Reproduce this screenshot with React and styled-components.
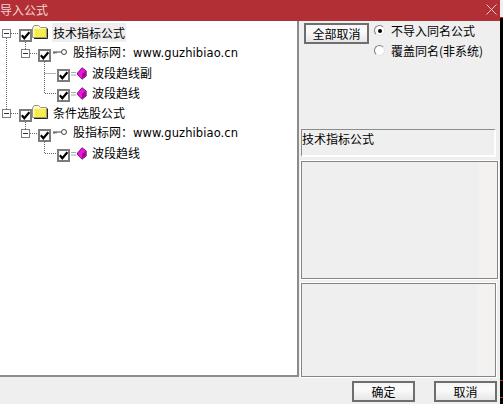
import React from "react";
import styled, { createGlobalStyle } from "styled-components";

const Global = createGlobalStyle`
  html, body { margin: 0; padding: 0; background: #000; }
  body { font-family: "Noto Sans CJK SC", "Liberation Sans", sans-serif; font-size: 12px; color: #000; }
  * { box-sizing: border-box; }
`;
const Screen = styled.div`
  width: 503px; height: 404px; display: flex; overflow: hidden; background: #000;
`;
const Dialog = styled.div`
  width: 500px; height: 404px; display: flex; flex-direction: column; background: #efefef;
`;
const Edge = styled.div`
  width: 3px; height: 404px; display: flex; flex-direction: column; background: #000;
`;
const EdgeTop = styled.div`height: 17px; background: #f0f0f0;`;
const EdgeTick = styled.div`
  height: 1px; background: #c8202c; margin-top: ${p => p.$gap}px;
`;
const TitleBar = styled.div`
  height: 21px; flex: none; background: #b22f36; color: #f3d5d5; display: flex;
  align-items: center; justify-content: space-between; padding: 0 3px 2px 0;
  font-size: 12px; line-height: 14px;
`;
const Body = styled.div`flex: none; height: 356px; display: flex;`;
const TreePane = styled.div`
  position: relative; width: 299px; height: 356px; background: #fff;
  border-right: 2px solid #8c8c8c; border-bottom: 2px solid #8c8c8c;
  padding-top: 2px;
`;
const Lines = styled.svg`position: absolute; left: 0; top: 0; pointer-events: none;`;
const Row = styled.div`
  height: 20px; display: flex; align-items: center; padding-left: ${p => p.$indent}px;
  position: relative;
`;
const Expander = styled.div`
  width: 9px; height: 9px; border: 1px solid #7d7d7d; background: #fff; margin: 1px 8px 0 0;
  display: flex; align-items: center; justify-content: center; flex: none;
  &::after { content: ""; width: 5px; height: 1px; background: #333; }
`;
const Check = styled.div`
  width: 13px; height: 13px; border: 2px solid #7c7c7c; background: #fff; flex: none; margin-top: 4px;
  display: flex; align-items: center; justify-content: center;
`;
const Label = styled.span`
  margin: -2px 0 0 ${p => p.$ml}px; white-space: nowrap; line-height: 19px; padding: 0 1px;
  background: ${p => (p.$sel ? "#eeeeee" : "transparent")}; color: #000;
`;
const Latin = styled.span`
  font-family: "DejaVu Sans", sans-serif; font-size: 11.5px; letter-spacing: 0.1px;
`;
const Side = styled.div`
  flex: 1; display: flex; flex-direction: column; padding: 2px 0 0 2px; min-width: 0;
`;
const TopArea = styled.div`display: flex; height: 106px; flex: none; align-items: flex-start; padding-left: 3px;`;
const Btn = styled.div`
  width: ${p => p.$w}px; height: 21px; flex: none; border: 2px solid #6e6e6e;
  background: linear-gradient(#f6f6f6, #fafafa 40%, #e6e6e6);
  display: flex; align-items: center; justify-content: center; font-size: 12px; line-height: 14px; color: #000;
`;
const Options = styled.div`display: flex; flex-direction: column; margin-left: 5px; padding-top: 2px; gap: 9px;`;
const Option = styled.div`display: flex; align-items: center; gap: 6px; height: 11px; white-space: nowrap; line-height: 11px;`;
const Radio = styled.div`
  width: 11px; height: 11px; border-radius: 50%; background: #fdfdfd; flex: none;
  border: 1.5px solid #808080; border-right-color: #e4e4e4; border-bottom-color: #e4e4e4;
  display: flex; align-items: center; justify-content: center;
  &::after { content: ""; width: 4px; height: 4px; border-radius: 50%; background: ${p => (p.$on ? "#000" : "transparent")}; }
`;
const InfoBox = styled.div`
  width: 195px; height: 28px; flex: none; border: 1px solid #fff; border-top: 1px solid #8c8c8c; border-left: 1px solid #8c8c8c;
  border-right-width: 2px; border-bottom-width: 2px;
  padding-top: 2px; font-size: 12px; line-height: 14px; white-space: nowrap;
`;
const Memo = styled.div`
  width: ${p => p.$w}px; height: ${p => p.$h}px; margin-top: ${p => p.$mt}px; flex: none;
  border: 1px solid #858585; outline: 1px solid #fff;
  display: flex; justify-content: flex-end; background: #efefef;
  &::after { content: ""; width: 18px; background: #f3f2f0; }
`;
const Footer = styled.div`
  flex: none; height: 27px; display: flex; justify-content: flex-end; gap: 19px;
  padding: 4px 3px 0 0;
`;

const Tick = () => (
  <svg width="9" height="9" viewBox="0 0 9 9">
    <path d="M0.8 4.3 L3.3 7.2 L8.4 1.2" fill="none" stroke="#000" strokeWidth="2.2" />
  </svg>
);
const Folder = () => (
  <svg width="16" height="14" viewBox="0 0 16 14" style={{ marginTop: -3, flex: "none" }}>
    <path d="M0.5 3 L2 0.5 H6.5 L8.5 2.5 H14.5 V12.5 H0.5 Z" fill="#fdf8d8" stroke="#9a9a7a" />
    <rect x="2.5" y="4" width="11.5" height="8" fill="#f4ec30" />
    <path d="M4 5 H13 M3 7 H13 M4 9 H13 M3 11 H13" stroke="#fff68a" strokeDasharray="1 1" />
    <path d="M15.5 3.5 V13.5 H2" fill="none" stroke="#222" />
  </svg>
);
const Key = () => (
  <svg width="15" height="8" viewBox="0 0 15 8" style={{ marginLeft: 2, marginTop: -3, flex: "none" }}>
    <path d="M0 4 H8" stroke="#444" strokeWidth="1" />
    <path d="M1 4 V6 M3 4 V5.5" stroke="#444" />
    <circle cx="11" cy="4" r="2.5" fill="#fff" stroke="#444" />
  </svg>
);
const Gem = () => (
  <svg width="16" height="13" viewBox="0 0 16 13" style={{ marginLeft: 1, flex: "none" }}>
    <path d="M0 5.5 H5 M0 8 H5" stroke="#a8a8a8" />
    <path d="M6.5 6 L11 0.7 L15.2 4 V9 L11 12.3 L6.5 7.5 Z" fill="#f010e0" stroke="#4a0a4a" strokeWidth="0.8" />
    <path d="M11 6.5 L14.8 4.4 V8.8 L11 11.8 Z" fill="#a00c90" />
  </svg>
);
const Close = () => (
  <svg width="11" height="11" viewBox="0 0 11 11">
    <path d="M0.5 0.5 L10.5 10.5 M10.5 0.5 L0.5 10.5" stroke="#f0c8c8" strokeWidth="1" />
  </svg>
);

const Parent = ({ text, sel }) => (
  <Row $indent={2}>
    <Expander />
    <Check><Tick /></Check>
    <Folder />
    <Label $ml={4} $sel={sel}>{text}</Label>
  </Row>
);
const Site = () => (
  <Row $indent={21}>
    <Expander />
    <Check><Tick /></Check>
    <Key />
    <Label $ml={4}>股指标网：<Latin>www.guzhibiao.cn</Latin></Label>
  </Row>
);
const Leaf = ({ text }) => (
  <Row $indent={57}>
    <Check><Tick /></Check>
    <Gem />
    <Label $ml={4}>{text}</Label>
  </Row>
);

export default function App() {
  return (
    <Screen>
      <Global />
      <Dialog>
        <TitleBar>
          <span>导入公式</span>
          <Close />
        </TitleBar>
        <Body>
          <TreePane>
            <Lines width="297" height="354">
              <g stroke="#666" strokeDasharray="1 1" fill="none">
                <path d="M6.5 17 V88" />
                <path d="M11 12.5 H19" />
                <path d="M11 92.5 H19" />
                <path d="M25.5 21 V28" />
                <path d="M25.5 101 V108" />
                <path d="M30 32.5 H38" />
                <path d="M30 112.5 H38" />
                <path d="M44.5 41 V72.5 H56 M44.5 52.5 H56" />
                <path d="M44.5 121 V132.5 H56" />
              </g>
            </Lines>
            <Parent text="技术指标公式" sel />
            <Site />
            <Leaf text="波段趋线副" />
            <Leaf text="波段趋线" />
            <Parent text="条件选股公式" />
            <Site />
            <Leaf text="波段趋线" />
          </TreePane>
          <Side>
            <TopArea>
              <Btn $w={65}>全部取消</Btn>
              <Options>
                <Option><Radio $on />不导入同名公式</Option>
                <Option><Radio />覆盖同名(非系统)</Option>
              </Options>
            </TopArea>
            <InfoBox>技术指标公式</InfoBox>
            <Memo $w={197} $h={118} $mt={4} />
            <Memo $w={195} $h={94} $mt={4} />
          </Side>
        </Body>
        <Footer>
          <Btn $w={63}>确定</Btn>
          <Btn $w={63}>取消</Btn>
        </Footer>
      </Dialog>
      <Edge>
        <EdgeTop />
        <EdgeTick $gap={0} />
        <EdgeTick $gap={362} />
        <EdgeTick $gap={16} />
      </Edge>
    </Screen>
  );
}
